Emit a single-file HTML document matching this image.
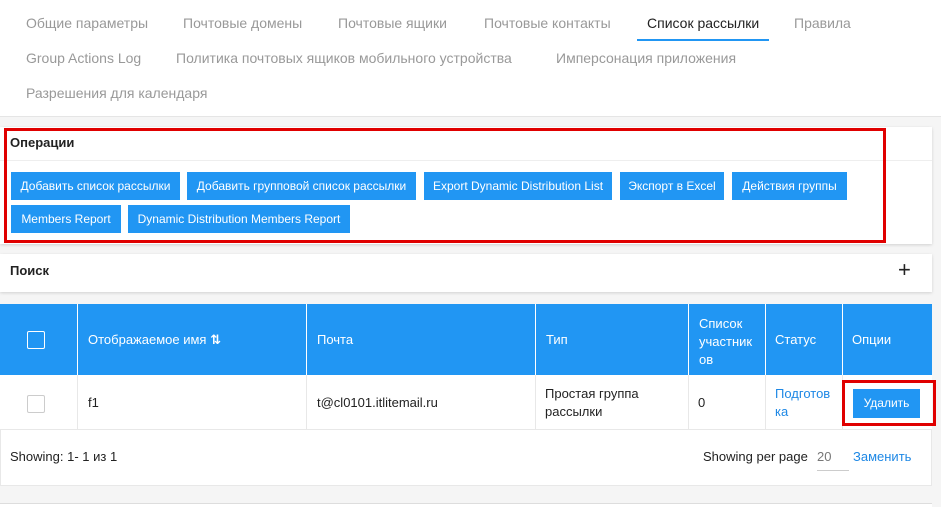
<!DOCTYPE html>
<html><head><meta charset="utf-8"><style>
*{box-sizing:border-box;margin:0;padding:0}
body{width:941px;height:507px;background:#f5f5f5;font-family:"Liberation Sans","DejaVu Sans",sans-serif;position:relative;overflow:hidden;color:#222}
.a{position:absolute;white-space:nowrap}
.top{position:absolute;left:0;top:0;width:941px;height:117px;background:#fff;border-bottom:1px solid #e5e5e5}
.tab{position:absolute;font-size:14px;color:#999}
.card{position:absolute;background:#fff;box-shadow:0 1px 3px rgba(0,0,0,.15)}
.btn{position:absolute;background:#2196f3;color:#fff;font-size:12px;height:28px;line-height:28px;text-align:center}
.hd{position:absolute;top:304px;height:71px;background:#2196f3;color:#fff;font-size:13px;border-right:1px solid #fff}
.td{position:absolute;top:375px;height:55px;background:#fff;font-size:13px;border-right:1px solid #e8e8e8;border-bottom:1px solid #e8e8e8}
</style></head><body>
<div class="top">
<div class="tab" style="left:26px;top:15px">Общие параметры</div>
<div class="tab" style="left:183px;top:15px">Почтовые домены</div>
<div class="tab" style="left:338px;top:15px">Почтовые ящики</div>
<div class="tab" style="left:484px;top:15px">Почтовые контакты</div>
<div class="tab" style="left:647px;top:15px;color:#222">Список рассылки</div>
<div class="a" style="left:637px;top:39px;width:132px;height:2px;background:#2196f3"></div>
<div class="tab" style="left:794px;top:15px">Правила</div>
<div class="tab" style="left:26px;top:50px">Group Actions Log</div>
<div class="tab" style="left:176px;top:50px">Политика почтовых ящиков мобильного устройства</div>
<div class="tab" style="left:556px;top:50px">Имперсонация приложения</div>
<div class="tab" style="left:26px;top:85px">Разрешения для календаря</div>
</div>
<div class="card" style="left:0;top:127px;width:932px;height:117px"></div>
<div class="a" style="left:0;top:160px;width:932px;height:1px;background:#eee"></div>
<div class="a" style="left:10px;top:135px;font-size:13px;font-weight:bold">Операции</div>
<div class="btn" style="left:11px;top:172px;width:169px">Добавить список рассылки</div>
<div class="btn" style="left:187px;top:172px;width:229px">Добавить групповой список рассылки</div>
<div class="btn" style="left:424px;top:172px;width:188px">Export Dynamic Distribution List</div>
<div class="btn" style="left:620px;top:172px;width:104px">Экспорт в Excel</div>
<div class="btn" style="left:732px;top:172px;width:115px">Действия группы</div>
<div class="btn" style="left:11px;top:205px;width:110px">Members Report</div>
<div class="btn" style="left:128px;top:205px;width:222px">Dynamic Distribution Members Report</div>
<div class="a" style="left:4px;top:128px;width:882px;height:115px;border:3px solid #e00000"></div>
<div class="card" style="left:0;top:254px;width:932px;height:38px"></div>
<div class="a" style="left:10px;top:263px;font-size:13px;font-weight:bold">Поиск</div>
<div class="a" style="left:898px;top:258px;font-size:22px;line-height:24px">+</div>
<div class="a" style="left:0;top:304px;width:932px;height:182px;background:#fff;border:1px solid #e8e8e8"></div>
<div class="hd" style="left:0;width:78px"><div class="a" style="left:27px;top:27px;width:18px;height:18px;border:1px solid #fff;border-radius:2px"></div></div>
<div class="hd" style="left:78px;width:229px;padding:28px 10px">Отображаемое имя <b>⇅</b></div>
<div class="hd" style="left:307px;width:229px;padding:28px 10px">Почта</div>
<div class="hd" style="left:536px;width:153px;padding:28px 10px">Тип</div>
<div class="hd" style="left:689px;width:77px;padding:11px 10px;line-height:18px;white-space:normal">Список<br>участник<br>ов</div>
<div class="hd" style="left:766px;width:77px;padding:28px 9px">Статус</div>
<div class="hd" style="left:843px;width:89px;padding:28px 9px;border:0">Опции</div>
<div class="td" style="left:0;width:78px"><div class="a" style="left:27px;top:20px;width:18px;height:18px;border:1px solid #ccc;border-radius:2px"></div></div>
<div class="td" style="left:78px;width:229px;padding:20px 10px">f1</div>
<div class="td" style="left:307px;width:229px;padding:20px 10px">t@cl0101.itlitemail.ru</div>
<div class="td" style="left:536px;width:153px;padding:10px 9px;line-height:18px">Простая группа<br>рассылки</div>
<div class="td" style="left:689px;width:77px;padding:20px 9px">0</div>
<div class="td" style="left:766px;width:77px;padding:10px 9px;line-height:18px;color:#1e88e5">Подготов<br>ка</div>
<div class="td" style="left:843px;width:89px;border-right:0"></div>
<div class="btn" style="left:853px;top:389px;width:67px;height:29px;line-height:29px">Удалить</div>
<div class="a" style="left:842px;top:380px;width:94px;height:46px;border:3px solid #e00000"></div>
<div class="a" style="left:10px;top:449px;font-size:13px">Showing: 1- 1 из 1</div>
<div class="a" style="left:703px;top:449px;font-size:13px">Showing per page</div>
<div class="a" style="left:817px;top:449px;font-size:13px;color:#777">20</div>
<div class="a" style="left:817px;top:470px;width:32px;height:1px;background:#ccc"></div>
<div class="a" style="left:853px;top:449px;font-size:13px;color:#1e88e5">Заменить</div>
<div class="a" style="left:0;top:503px;width:932px;height:4px;background:#fff;border-top:1px solid #ddd"></div>
</body></html>
